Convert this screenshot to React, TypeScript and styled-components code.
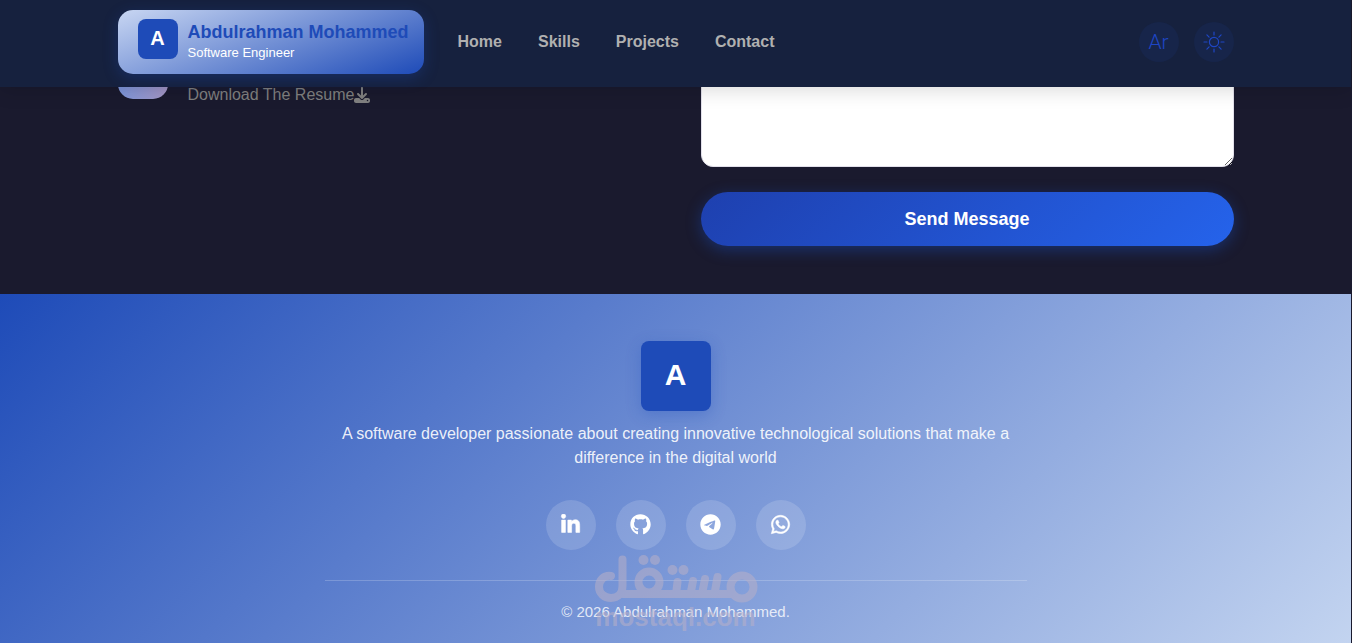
import React from "react";
import styled, { createGlobalStyle } from "styled-components";
import { FaDownload, FaGithub, FaLinkedinIn, FaTelegram, FaWhatsapp } from "react-icons/fa6";

const GlobalStyle = createGlobalStyle`
  * { box-sizing: border-box; }
  body {
    margin: 0;
    background: #1a1a2e;
    font-family: "Liberation Sans", Arial, sans-serif;
    font-size: 16px;
    line-height: 24px;
    overflow: hidden;
  }
  p { margin: 0; }
  a { color: inherit; text-decoration: none; }
`;

const Page = styled.div`
  padding-right: 1px;
`;

const Container = styled.div`
  width: 100%;
  max-width: 1156px;
  margin: 0 auto;
  padding: 0 20px;
`;

const Header = styled.header`
  position: relative;
  z-index: 2;
  background: #16213e;
  padding: 10px 0 13px;
  box-shadow: 0 2px 20px rgba(0, 0, 0, 0.16);
`;

const HeaderRow = styled(Container)`
  display: flex;
  align-items: center;
`;

const Brand = styled.a`
  display: flex;
  align-items: flex-start;
  gap: 10px;
  height: 64px;
  padding: 9px 15px 9px 20px;
  border-radius: 15px;
  background: linear-gradient(160deg, #c8d6f2 0%, #1e4bb8 100%);
  box-shadow: 0 4px 15px rgba(30, 75, 184, 0.3);
`;

const LogoTile = styled.span<{ $large?: boolean }>`
  display: flex;
  align-items: center;
  justify-content: center;
  width: ${(p) => (p.$large ? 70 : 40)}px;
  height: ${(p) => (p.$large ? 70 : 40)}px;
  padding-bottom: 2px;
  border-radius: 8px;
  background: #1e4bb8;
  color: #fff;
  font-size: ${(p) => (p.$large ? 30 : 20)}px;
  font-weight: 700;
  box-shadow: ${(p) => (p.$large ? "0 4px 15px rgba(30, 75, 184, 0.3)" : "none")};
`;

const BrandText = styled.span`
  display: flex;
  flex-direction: column;
  padding-top: 2px;
`;

const BrandName = styled.span`
  color: #1e4bb8;
  font-size: 18px;
  font-weight: 700;
  line-height: 22px;
`;

const BrandRole = styled.span`
  color: #fff;
  font-size: 13px;
  line-height: 20px;
`;

const Nav = styled.nav`
  display: flex;
  gap: 36px;
  margin-left: 34px;
  color: #b0b0b0;
  font-weight: 700;
`;

const Tools = styled.div`
  display: flex;
  gap: 15px;
  margin-left: auto;
`;

const ToolButton = styled.button`
  display: flex;
  align-items: center;
  justify-content: center;
  width: 40px;
  height: 40px;
  padding: 0;
  border: 0;
  border-radius: 50%;
  background: #17254a;
  color: #1e46c4;
  font-family: Roboto, sans-serif;
  font-size: 21px;
  font-weight: 300;
`;

const Contact = styled.main`
  margin-top: -38px;
  padding-bottom: 48px;
`;

const ContactGrid = styled(Container)`
  display: grid;
  grid-template-columns: 1fr 1fr;
  gap: 50px;
`;

const ContactItem = styled.div`
  display: flex;
  align-items: flex-start;
  gap: 20px;
`;

const ItemBadge = styled.span`
  width: 50px;
  height: 50px;
  border-radius: 15px;
  background: linear-gradient(90deg, #7d97dc, #a596c4);
`;

const ResumeLink = styled.a`
  display: flex;
  align-items: center;
  padding-top: 34px;
  color: #808080;
`;

const Form = styled.form`
  display: flex;
  flex-direction: column;
  gap: 25px;
`;

const Message = styled.textarea`
  display: block;
  width: 100%;
  height: 118px;
  border: 1px solid #e2e0ea;
  border-radius: 12px;
  background: #fff;
  resize: vertical;
`;

const SendButton = styled.button`
  height: 54px;
  border: 0;
  border-radius: 27px;
  background: linear-gradient(135deg, #1e40af 0%, #2563eb 100%);
  box-shadow: 0 4px 15px rgba(24, 75, 184, 0.45);
  color: #fff;
  font-family: inherit;
  font-size: 18px;
  font-weight: 700;
`;

const Footer = styled.footer`
  display: flex;
  flex-direction: column;
  align-items: center;
  padding: 47px 20px 20px;
  background: linear-gradient(135deg, #1e4bb8 0%, #c3d4f0 100%);
  color: #fff;
  text-align: center;
`;

const About = styled.p`
  max-width: 700px;
  margin-top: 11px;
  color: rgba(255, 255, 255, 0.9);
`;

const Socials = styled.div`
  display: flex;
  gap: 20px;
  margin: 30px 0;
`;

const SocialLink = styled.a<{ $bold?: boolean }>`
  display: flex;
  align-items: center;
  justify-content: center;
  width: 50px;
  height: 50px;
  padding-bottom: 2px;
  border-radius: 50%;
  background: rgba(255, 255, 255, 0.15);
  font-size: 21px;

  svg { stroke-width: ${(p) => (p.$bold ? 14 : 0)}; }
`;

const Legal = styled.div`
  position: relative;
  width: 100%;
  max-width: 702px;
  padding-top: 19px;
  border-top: 1px solid rgba(255, 255, 255, 0.2);
  color: rgba(255, 255, 255, 0.8);
  font-size: 15px;
`;

const Watermark = styled.div`
  position: absolute;
  top: -26px;
  left: 50%;
  width: 164px;
  margin-left: -82px;
  color: #b8b0c8;
  opacity: 0.55;
  font-size: 26px;
  font-weight: 700;
  line-height: 26px;
  pointer-events: none;

  svg { display: block; }
`;

const SunIcon = () => (
  <svg width="22" height="22" viewBox="0 0 22 22" fill="none" stroke="currentColor" strokeWidth="1.2" strokeLinecap="round" aria-hidden="true">
    <circle cx="11" cy="11" r="4.6" />
    <path d="M11 1v3M11 18v3M1 11h3M18 11h3M3.9 3.9l2.2 2.2M15.9 15.9l2.2 2.2M3.9 18.1l2.2-2.2M15.9 6.1l2.2-2.2" />
  </svg>
);

const WatermarkLogo = () => (
  <svg width="164" height="49" viewBox="0 0 164 49" fill="none" stroke="currentColor" strokeWidth="8" strokeLinecap="round" strokeLinejoin="round" aria-hidden="true">
    <path d="M17 21C10 20 5 25 5 32C5 38 10 43 17 43C24 43 28.500 38 28.500 31V4.500" />
    <path d="M29 39H137" />
    <circle cx="55" cy="27" r="10.500" />
    <path d="M83.500 27L82 39M99 26L96.500 39M111 24L108 39M123.500 22L120.500 39" />
    <circle cx="148" cy="32" r="11.500" />
    <g fill="currentColor" stroke="none">
      <circle cx="49.500" cy="5" r="5" />
      <circle cx="61" cy="5" r="5" />
      <circle cx="78.500" cy="15" r="5" />
      <circle cx="89.500" cy="15" r="5" />
    </g>
  </svg>
);

const socials = [
  { label: "LinkedIn", Icon: FaLinkedinIn, bold: true },
  { label: "GitHub", Icon: FaGithub, bold: false },
  { label: "Telegram", Icon: FaTelegram, bold: false },
  { label: "WhatsApp", Icon: FaWhatsapp, bold: true },
];

export default function App() {
  return (
    <Page>
      <GlobalStyle />
      <Header>
        <HeaderRow>
          <Brand href="#home">
            <LogoTile>A</LogoTile>
            <BrandText>
              <BrandName>Abdulrahman Mohammed</BrandName>
              <BrandRole>Software Engineer</BrandRole>
            </BrandText>
          </Brand>
          <Nav>
            <a href="#home">Home</a>
            <a href="#skills">Skills</a>
            <a href="#projects">Projects</a>
            <a href="#contact">Contact</a>
          </Nav>
          <Tools>
            <ToolButton type="button">Ar</ToolButton>
            <ToolButton type="button" aria-label="Toggle theme"><SunIcon /></ToolButton>
          </Tools>
        </HeaderRow>
      </Header>
      <Contact id="contact">
        <ContactGrid>
          <ContactItem>
            <ItemBadge />
            <ResumeLink href="#resume">Download The Resume<FaDownload /></ResumeLink>
          </ContactItem>
          <Form>
            <Message aria-label="Message" />
            <SendButton type="button">Send Message</SendButton>
          </Form>
        </ContactGrid>
      </Contact>
      <Footer>
        <LogoTile $large>A</LogoTile>
        <About>
          A software developer passionate about creating innovative technological solutions that make a
          difference in the digital world
        </About>
        <Socials>
          {socials.map(({ label, Icon, bold }) => (
            <SocialLink key={label} href={"#" + label} aria-label={label} $bold={bold}><Icon /></SocialLink>
          ))}
        </Socials>
        <Legal>
          <p>© 2026 Abdulrahman Mohammed.</p>
          <Watermark>
            <WatermarkLogo />
            mostaql.com
          </Watermark>
        </Legal>
      </Footer>
    </Page>
  );
}
